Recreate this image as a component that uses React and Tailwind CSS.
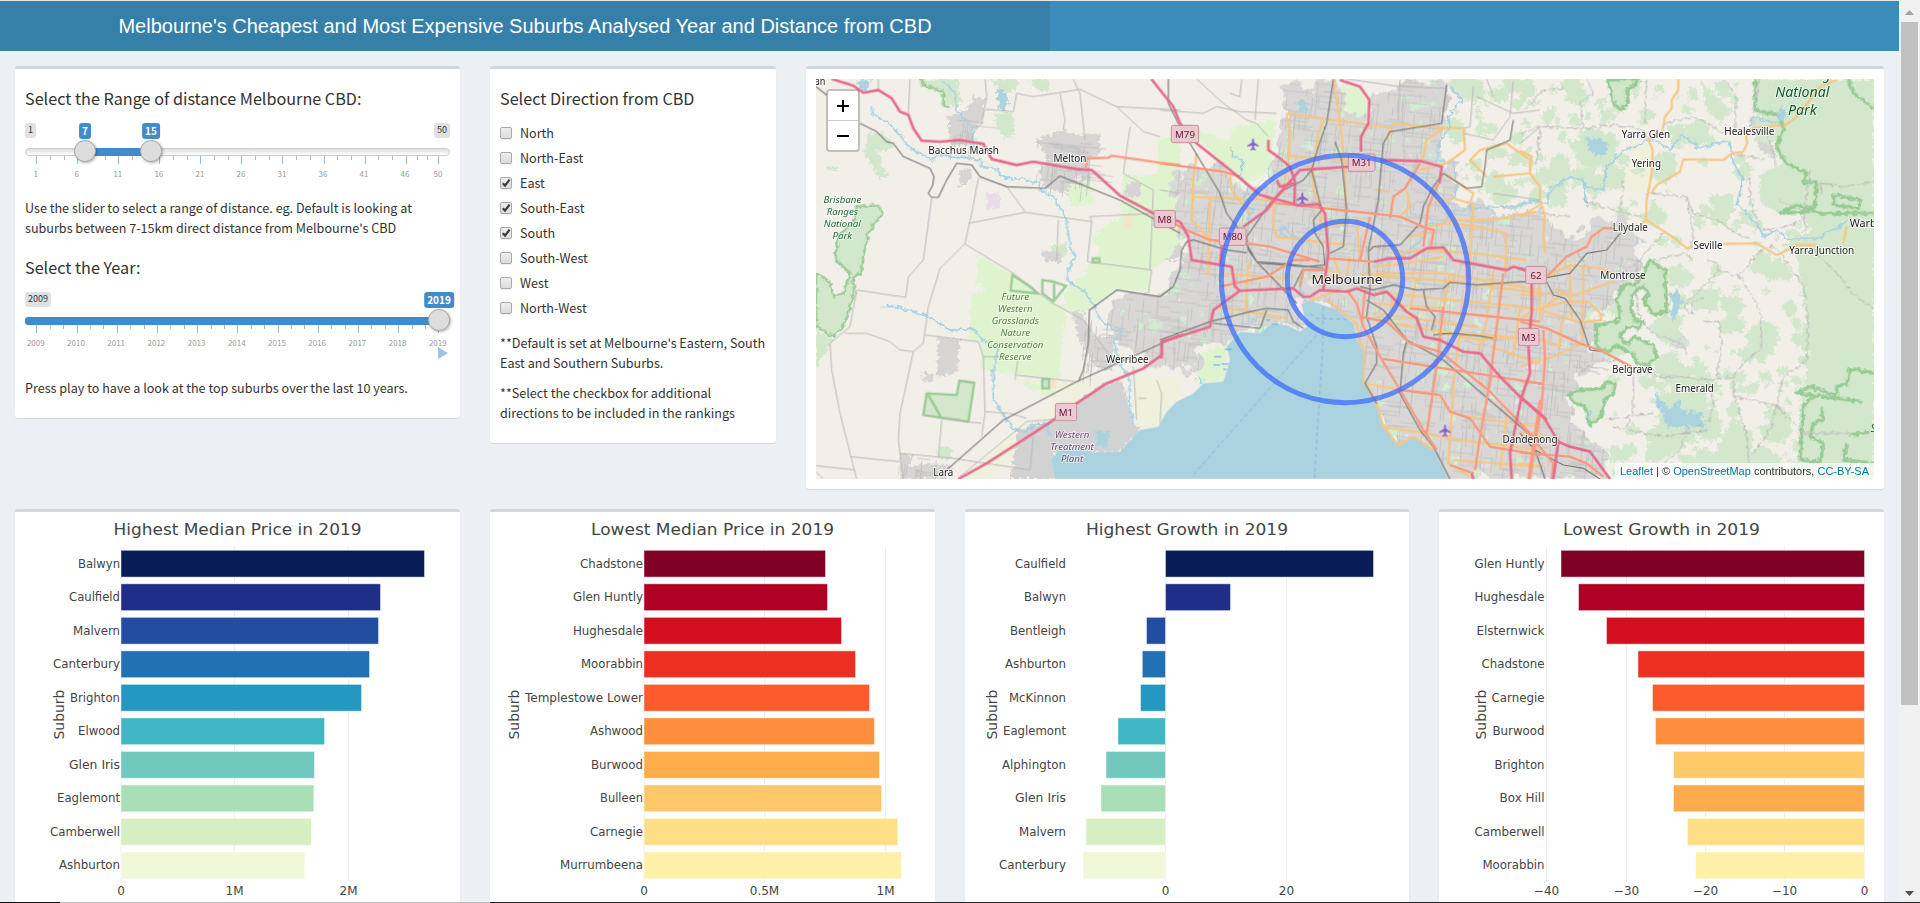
import React from "react";

const SANS = "font-['Noto_Sans_CJK_SC','Noto_Sans',sans-serif]";

/* ---------- Generic panels ---------- */

function Box({ className, children }) {
  return (
    <section
      className={`shrink-0 rounded-[3px] border-t-[3px] border-[#d2d6de] bg-white shadow-[0_1px_1px_rgba(0,0,0,0.1)] ${className}`}
    >
      {children}
    </section>
  );
}

function Heading({ children }) {
  return <h4 className="h-5 text-[16.2px] leading-5 text-[#333]">{children}</h4>;
}

/* ---------- Sliders ---------- */

function Slider({ ticks, min, max, fill, handles }) {
  const minors = [];
  ticks.forEach((t, i) => {
    if (i < ticks.length - 1) {
      const step = (ticks[i + 1].x - t.x) / 3;
      minors.push(t.x + step, t.x + step * 2);
    }
  });
  return (
    <div className="relative mt-[15px] h-[60px] w-[425px] font-['Noto_Sans_CJK_SC',sans-serif]">
      <div className="flex justify-between">
        <span className="h-[15px] rounded-[3px] bg-[#e1e1e1] px-[3px] text-[9px] leading-[14px] text-[#333]">{min}</span>
        {max && (
          <span className="h-[15px] rounded-[3px] bg-[#e1e1e1] px-[3px] text-[9px] leading-[14px] text-[#333]">{max}</span>
        )}
      </div>
      <div className="absolute left-0 top-[25px] h-2 w-[425px] rounded-full border border-[#ccc] bg-linear-to-b from-[#dedede] to-white" />
      <div
        className="absolute top-[25px] h-2 rounded-l-[3px] bg-[#428bca]"
        style={{ left: fill[0], width: fill[1] - fill[0] }}
      />
      {minors.map((x) => (
        <span key={x} className="absolute top-[33px] h-1 w-px bg-[#bbb]" style={{ left: Math.round(x) }} />
      ))}
      {ticks.map((t) => (
        <React.Fragment key={t.label}>
          <span className="absolute top-[33px] h-2 w-px bg-[#8fbfe3]" style={{ left: Math.round(t.x) }} />
          <span
            className="absolute top-[45px] w-10 -translate-x-1/2 text-center text-[8px] leading-3 text-[#999]"
            style={{ left: t.x - 0.5 }}
          >
            {t.label}
          </span>
        </React.Fragment>
      ))}
      {handles.map((h) => (
        <React.Fragment key={h.label}>
          <span
            className="absolute top-0 h-4 -translate-x-1/2 rounded-[3px] bg-[#428bca] px-[3px] text-[10px] font-bold leading-4 text-white"
            style={{ left: h.x }}
          >
            {h.label}
          </span>
          <span
            className="absolute top-[17px] size-[22px] -translate-x-1/2 rounded-full border border-[#aaa] bg-[#ddd] shadow-[1px_1px_3px_rgba(0,0,0,0.3)]"
            style={{ left: h.x }}
          />
        </React.Fragment>
      ))}
    </div>
  );
}

const distanceTicks = [1, 6, 11, 16, 21, 26, 31, 36, 41, 46, 50].map((v) => ({ label: v, x: 11.3 + (v - 1) * 8.206 }));
const yearTicks = Array.from({ length: 11 }, (_, i) => ({ label: 2009 + i, x: 11.3 + i * 40.2 }));

const directions = [
  ["North", false],
  ["North-East", false],
  ["East", true],
  ["South-East", true],
  ["South", true],
  ["South-West", false],
  ["West", false],
  ["North-West", false],
];

function Check({ on }) {
  return (
    <span className="relative size-3 rounded-[2px] border border-[#a9a9a9] bg-linear-to-b from-[#eee] to-[#dcdcdc] shadow-[0_1px_0_rgba(0,0,0,0.06)]">
      {on && (
        <svg viewBox="0 0 10 10" className="absolute left-0 top-0 size-[10px]">
          <path d="M1.8 5.2 L4 7.6 L8.6 1.6" fill="none" stroke="#3c3c3c" strokeWidth="2.2" />
        </svg>
      )}
    </span>
  );
}

/* ---------- Map ---------- */

function makeRandom(seed) {
  let s = seed;
  return () => {
    s = (s * 1664525 + 1013904223) % 4294967296;
    return s / 4294967296;
  };
}

function streetPath(seed, n, x0, y0, x1, y1) {
  const r = makeRandom(seed);
  let d = "";
  for (let i = 0; i < n; i++) {
    const x = x0 + r() * (x1 - x0);
    const y = y0 + r() * (y1 - y0);
    const len = 15 + r() * 75;
    if (r() < 0.5) d += `M${x.toFixed(0)},${y.toFixed(0)}l${len.toFixed(0)},${(len * 0.1).toFixed(0)}`;
    else d += `M${x.toFixed(0)},${y.toFixed(0)}l${(-len * 0.1).toFixed(0)},${len.toFixed(0)}`;
  }
  return d;
}

function blobPath(seed, n, x0, y0, x1, y1, min, max) {
  const r = makeRandom(seed);
  let d = "";
  for (let i = 0; i < n; i++) {
    const cx = x0 + r() * (x1 - x0);
    const cy = y0 + r() * (y1 - y0);
    const size = min + r() * r() * (max - min);
    for (let k = 0; k < 8; k++) {
      const a = (k / 8) * Math.PI * 2;
      const q = size * (0.45 + r() * 0.7);
      d += `${k ? "L" : "M"}${(cx + Math.cos(a) * q).toFixed(0)},${(cy + Math.sin(a) * q * 0.9).toFixed(0)}`;
    }
    d += "Z";
  }
  return d;
}

const URBAN =
  "M40,345 L130,310 200,335 270,385 330,345 350,250 370,130 385,75 480,57 L545,57 560,150 610,190 640,110 690,90 730,57 850,60 860,150 850,210 830,290 900,320 870,420 1000,450 1080,455 1140,440 1170,510 1240,530 1300,475 1400,480 1450,540 1430,640 1400,650 1370,720 1320,740 1310,790 1290,860 1350,900 1415,915 1320,925 1250,930 1240,1000 1230,1080 1290,1130 1340,1210 1350,1257 865,1257 820,1170 760,1130 715,1160 665,1090 650,1030 610,960 615,880 590,840 580,790 520,745 450,720 420,730 440,800 380,800 330,795 300,815 240,815 215,850 120,855 110,930 -40,920 -50,880 -140,870 -150,780 -120,700 0,705 60,600 85,540 40,480Z";
const BAY =
  "M-315,1257 L-325,1200 -290,1150 -200,1178 -120,1175 -60,1110 -5,1100 20,1055 50,1025 100,1000 130,970 190,965 210,900 200,860 240,815 300,820 330,795 380,795 420,815 440,800 425,735 450,722 520,745 580,790 590,840 615,880 610,960 650,1030 665,1090 715,1160 760,1130 820,1170 865,1257Z";

const WEST = "translate(-1080 0)";
const EAST = "translate(1080 -180)";

const westForest =
  "M360,57 H475 L482,130 450,142 430,132 430,100 400,95 365,80Z M560,57 H655 L650,90 620,100 590,75Z M585,160 L635,158 645,230 610,235 590,200Z M200,225 L245,215 285,250 265,275 235,270 245,320 270,350 235,352 215,310 190,280Z M80,320 h35 v10 h-35Z M48,810 L100,835 85,870 60,900 48,930Z M745,560 L800,550 800,590 760,590Z M415,1160 h38 v38 h-38Z M690,60 L750,57 745,100 705,85Z";
const westGrass =
  "M535,585 L630,640 750,725 800,740 780,900 780,960 650,945 540,925 545,850 505,835 515,700 560,685 525,675Z M970,350 L1070,345 1075,235 1140,228 V560 H1060 L1050,690 950,690 870,740 820,790 790,700 850,640 900,570 875,540 910,500 960,470Z M800,380 L870,350 880,430 810,440Z M670,955 L760,960 770,1015 680,985Z";
const eastForest =
  "M700,237 H1062 V920 L1000,850 900,750 850,640 780,640 720,610 720,520 790,490 765,440 775,385 700,340Z M820,700 L1062,700 1062,1437 830,1437 840,1210 870,1060 820,1030 860,960Z M540,240 L600,300 640,330 600,370 560,330Z M0,240 L40,240 50,280 0,310Z M150,250 L200,270 190,320 140,300Z M80,545 L140,560 140,620 90,620Z M150,430 L230,390 300,420 270,500 180,500Z M560,590 L640,580 640,640 590,640Z M480,1090 L560,1180 570,1270 480,1350 420,1380 370,1300 420,1270Z M640,1250 L700,1300 690,1400 620,1437 560,1400Z M300,237 L360,237 350,300Z";
const eastPark =
  "M265,237 H355 L350,250 320,270 325,310 300,330 275,300Z M390,780 L435,810 440,935 400,945 370,900 385,880 370,860 345,875 330,920 345,960 370,965 355,985 320,980 300,1010 320,1030 345,1010 400,1035 410,1070 385,1095 350,1090 340,1065 290,1035 260,1055 230,1040 228,975 290,965 300,940 290,900 310,855 350,850 370,820Z M145,1185 L175,1170 245,1165 260,1145 285,1150 280,1180 255,1200 245,1250 210,1275 195,1220 165,1210Z";
const eastParkLine =
  "M705,237 V330 L780,345 790,385 770,440 800,490 860,520 850,550 890,545 885,620 860,635 780,640 830,615 900,640 1062,640 M940,585 L1020,600 1015,625 940,615Z M985,237 L1000,280 1062,325 M1062,1120 L990,1105 980,1150 950,1160 950,1185 870,1160 830,1180 1030,1205 M880,1190 L850,1220 840,1380 900,1385 910,1330 870,1310 880,1270 910,1260 905,1220 M990,1305 L1050,1295 M980,1330 L970,1380 1062,1390";

const westMinor =
  "M235,57 V90 M330,57 L325,160 M555,57 L560,110 545,190 520,215 515,240 M560,148 L640,155 650,100 700,110 840,88 950,140 1140,150 M780,100 L795,180 790,210 M820,57 L840,100 855,240 M990,200 L970,340 1060,390 M950,140 L1030,215 1080,230 M395,415 L370,600 325,650 317,712 170,690 150,800 90,850 95,930 120,1060 170,1257 M535,355 L515,460 495,550 420,625 385,740 370,850 340,875 300,1060 295,1140 310,1257 M505,490 L675,457 875,485 870,470 1060,460 M620,380 L675,455 M775,480 L770,600 M875,485 L862,605 1055,630 1045,700 M1060,390 L1050,630 M495,552 L640,640 750,725 850,780 940,900 M375,825 L535,845 550,890 600,890 M135,820 L200,820 270,845 300,870 340,875 M550,890 L555,1060 545,1130 M655,890 L645,960 M645,945 L830,965 M150,1190 L300,1205 M300,1180 L460,1195 690,1230 700,1130 M425,1080 L415,1190 M555,1055 L630,1060 680,1075 M480,1250 L680,1085 760,1078 M545,1090 L420,1075 M48,1217 L165,1230 M48,1235 L70,1257 M1000,920 L1010,1080 M1070,960 L1085,1000 1080,1090 M1015,1015 L1040,1015";
const eastMinor =
  "M0,340 L70,270 130,265 M0,400 L60,380 190,385 240,380 280,375 340,380 380,400 M60,380 L50,490 M200,237 L220,280 180,310 190,385 M380,237 L375,370 M430,370 L520,350 580,380 610,400 M610,237 L650,290 645,380 M720,237 L700,340 M380,580 L500,590 520,640 590,660 650,700 690,715 M500,590 L520,710 505,750 M400,780 L490,760 515,775 M560,780 L595,790 590,820 540,870 490,920 520,945 515,910 550,890 M590,810 L660,830 M640,460 L740,480 M660,830 L720,930 725,1040 670,1090 640,1130 640,1190 700,1200 780,1220 M740,400 L770,495 M720,690 L690,600 690,530 M660,830 L710,760 760,740 790,770 850,860 865,960 860,1080 790,1130 770,1220 M840,640 L860,680 845,700 M725,690 L800,680 850,660 870,510 M870,740 L960,830 1000,880 1062,930 M905,585 L900,550 970,560 1062,545 M640,1130 L560,1140 480,1130 410,1130 340,1100 M560,1140 L580,1200 570,1260 500,1290 480,1350 430,1390 M640,1170 L660,1240 680,1310 690,1437 M700,1360 L750,1290 770,1220 850,1300 1000,1300 M400,1240 L250,1260 M340,1110 L340,1220 320,1280 M350,800 L345,870 360,960 400,1000 480,1030 500,1060 M430,700 L340,800 M550,960 L600,970 605,1050 590,1130 M190,600 L280,630 360,650 M300,640 L310,540 M60,640 L150,650 M270,1110 L200,1100 170,1130 M270,1280 L430,1310 560,1290 M820,620 L780,600 M170,750 L230,850 M160,1100 L240,1120";
const midMinor =
  "M110,57 L190,130 260,180 290,190 325,230 M0,150 L130,160 170,140 240,155 350,160 M295,57 L285,180 M245,57 L240,110 210,100 M560,57 L720,80 860,85 M720,60 L715,180 M940,80 L930,200 910,205 M950,110 L1060,160 1140,150 M1060,60 L1050,170 M910,220 L1000,240 1050,170 M980,57 L1000,110 M0,390 L60,400 M1000,400 L1140,420 M1140,200 L1080,250";

const motorways = {
  west: "M95,57 L160,77 190,98 235,90 275,115 300,155 325,165 340,205 365,242 420,245 480,240 550,252 575,297 650,315 700,305 830,327 875,330 960,407 1070,465 1140,485 M475,1257 L560,1210 700,1120 760,1080 830,1030 920,970 1030,925 1085,885 1085,845 1150,825",
  mid: "M60,485 L85,530 95,600 215,620 225,680 240,692 400,685 430,710 450,710 480,690 560,695 590,685 640,705 680,695 740,755 770,775 790,830 840,840 910,875 960,880 1020,950 1080,1010 1160,1080 M-26,57 L40,140 60,190 110,250 210,330 300,405 420,437 475,432 495,460 505,580 490,690 M325,240 V270 L360,295 390,320 405,365 403,435 M5,895 V845 L150,800 160,750 240,692 M180,620 L185,560 200,520 M250,500 L320,450 350,410 420,330 570,320 M660,300 L780,303 845,320 838,370 M540,60 L600,80 628,120 625,190 603,230 603,275 M350,360 L360,380 400,370 M640,605 L690,595 750,595 800,565 850,562 880,600 960,615 1040,630 1060,620 1100,632 M1115,670 L1115,760 1105,850 1110,940 1085,1010 1070,1080 1050,1180 1055,1257 M935,1240 L940,1257",
  east: "M0,1190 L70,1250 115,1325 150,1340 210,1355 270,1437 M115,1325 L100,1437 M0,805 L15,810",
};
const trunks = {
  west: "M858,325 L862,295 925,293 935,287 1080,308 1140,315",
  mid: "M0,310 L190,335 240,350 M310,405 L350,430 540,450 720,470 M690,475 L700,410 735,385 780,310 M720,470 L800,505 822,510 812,560 M40,490 L90,515 150,540 260,550 330,560 480,605 M180,680 L320,650 400,600 450,600 M500,595 L640,605 M630,470 L600,600 M835,370 L805,440 790,560 M850,740 L830,920 800,1120 M1030,640 L1010,800 990,960 960,1130 945,1230 M750,745 L950,765 1140,785 M560,690 L590,730 610,800 660,890 720,990 790,1110 830,1170 M660,895 L850,925 1140,970 M720,990 L840,1005 870,1055 930,1075 990,1160 1140,1185 M600,770 L680,785 750,850 840,875 985,990 1130,1140 M615,690 L605,790 M420,680 L430,630 500,630 M1140,1020 L1105,1257 M870,1215 L940,1240",
  east: "M80,830 L140,770 200,740 215,710 250,685 280,685 M0,965 L80,985 180,1030 250,1055 335,1100 M70,990 L75,1080 65,1220 50,1300 30,1437 M0,1270 L100,1390 95,1437 M0,1358 L150,1370 200,1390 250,1430 M0,1142 L70,1152",
};
const primaries = {
  mid: "M380,160 L520,180 700,205 M380,160 L390,220 385,300 370,400 M385,288 L560,300 M700,190 L830,203 910,205 M520,57 L540,190 552,300 560,450 M465,300 L475,220 490,180 M455,300 L460,390 485,450 480,500 560,490 M700,190 L680,240 M785,310 L800,240 850,205 M910,205 L915,270 860,310 780,330 M980,350 L930,300 960,270 1040,250 1110,300 1110,340 1000,350 M860,345 L940,400 930,430 880,415 820,430 M100,410 L210,415 330,420 M110,280 L100,350 95,480 150,540 M210,340 L215,390 245,430 270,460 M340,430 L340,500 350,530 560,555 M150,410 L145,650 M265,600 L260,690 258,750 M180,640 L380,655 M180,740 L380,775 M590,480 L600,600 M645,390 L690,395 M740,390 L750,440 720,470 M690,580 L800,570 940,580 1100,600 M640,620 L740,610 850,590 M650,640 L850,640 1140,690 M700,650 L900,665 1140,700 M690,700 L870,720 1090,740 M640,730 L850,745 M640,760 L950,800 M640,780 L840,815 1140,840 M620,970 L720,990 M665,1100 L800,1120 900,1140 1140,1170 M800,500 L870,490 950,500 1040,520 1035,640 M940,430 L935,520 925,680 895,850 880,980 865,1210 930,1250 M1000,630 L980,780 955,880 M1080,740 L1060,880 M870,640 L850,750 M770,650 L750,750 M700,720 L690,790 M990,860 L1140,910 M920,1070 L1070,1090 1140,1100 M850,820 L960,840 1060,830 M1040,1060 L1020,1230 M880,1200 L1000,1210 1140,1220 M500,720 L590,790 600,850 615,870 610,960 650,1030 670,1100 715,1155 760,1130 820,1170 M490,620 L560,660 M520,590 L540,650 M570,590 L560,650 M620,600 L640,680 M450,650 L540,650 M450,720 L540,690 M850,480 L1000,480 1130,455 M600,640 L700,650 M740,530 L800,520",
  east: "M475,237 V270 L455,300 455,325 435,350 427,395 M0,452 L35,470 30,520 60,560 60,600 75,650 70,700 75,760 M0,650 L60,615 M382,410 L398,450 395,520 380,600 378,660 410,680 465,715 500,745 520,740 M395,580 L410,555 480,515 490,478 610,480 635,460 670,455 682,430 675,395 700,385 780,375 M378,660 L360,675 M610,732 L710,730 770,765 830,735 890,735 M980,680 L970,730 M950,240 L900,260 870,300 830,350 790,380 M75,830 L150,795 240,805 280,820 M0,885 L70,885 120,870 150,890 280,845 M0,920 L60,930 180,968 245,960 240,940 205,905 140,905 40,930 0,960 M190,800 L188,1030 M150,800 L150,890 155,960 M60,830 V960 M125,960 L120,1040 M40,1010 L120,1040 M0,1100 L100,1070 190,1030 M0,1300 L75,1310 M0,1390 L70,1400 M60,930 L130,880",
};
const rails = {
  west: "M48,80 L80,105 M180,190 L230,215 260,245 280,250 310,290 390,325 402,350 398,375 385,400 395,412 415,412 440,360 470,310 515,315 540,350 620,380 735,385 780,348 960,420 1140,520 M440,1230 L610,1080 830,965 1140,825 M835,965 L850,930 865,850 868,750 950,690 1080,710 1120,680 1140,630",
  mid: "M60,630 L65,570 80,545 100,540 200,570 260,578 M25,57 V130 L55,190 90,250 180,400 200,460 230,500 290,605 380,612 490,625 M260,530 L265,570 290,605 410,730 M520,60 L500,190 475,260 455,330 485,450 460,480 465,520 490,560 495,615 M525,245 L545,300 560,450 550,560 510,580 M1060,180 L1050,240 980,270 975,320 965,380 920,385 850,340 820,380 790,440 780,490 720,555 640,560 625,575 M860,75 L845,190 690,215 670,250 655,420 625,570 630,690 M600,680 L640,690 700,675 770,690 850,685 870,667 950,675 1080,665 1160,667 M620,720 L670,750 740,840 850,900 1000,1030 1140,1150 M740,845 L730,880 720,1000 780,1110 820,1160 870,1257 M630,690 L620,770 650,860 650,910 615,970 650,1030 M0,840 L150,785 270,755 320,745 385,750 400,785 430,805 M160,790 L300,805 320,750 M790,690 L800,740 825,770 815,810 M820,825 L870,820 960,828 1000,835 M260,530 L330,430 370,390 430,360 455,330 M300,610 L440,620 495,615 M400,685 L430,625",
  east: "M80,833 L150,820 200,760 260,750 300,700 M80,845 L100,885 135,895 180,960 210,1050 250,1055 330,1100 M0,1300 L45,1350 130,1395 190,1405 240,1437 M45,1350 L75,1437",
};
const rivers = {
  west: "M215,140 L220,165 260,185 300,225 330,265 395,300 415,285 470,290 540,300 545,320 590,325 605,350 640,360 670,350 680,365 715,365 725,395 760,410 800,480 810,560 825,590 800,640 805,665 850,690 880,735 900,780 940,805 965,810 940,850 960,910 990,960 985,1030 1000,1090 M425,57 L465,100 470,150 515,200 520,260 M245,740 L290,740 385,770 450,810 520,805 560,850 595,870 580,930 580,1020 620,1080 640,1110 680,1115 700,1095 740,1090 M740,1090 L750,1130",
  mid: "M210,260 L220,290 250,300 240,350 265,380 250,430 280,450 260,480 M870,80 L905,120 865,170 870,200 840,240 830,300 880,310 890,380 880,420 M1140,420 L1060,440 1000,440 920,450 880,450 850,490 810,490 790,530 740,580 M690,590 L640,620 M440,730 L420,690 430,640 M380,530 L360,520 370,500 400,530 440,550 M740,580 L690,600",
  east: "M0,620 L30,600 80,610 90,570 150,530 190,540 200,560 250,570 260,500 310,450 350,440 380,415 420,430 450,450 485,405 540,445 610,425 630,430 640,490 670,540 650,610 710,670 730,710 770,690 800,715 905,715 920,695 960,680 985,660 M190,540 L200,625 M690,380 L700,350 740,365 780,370",
};
const lakes = {
  west: "M170,60 L215,62 195,90 178,88Z M590,80 L610,90 625,125 615,155 600,150 592,115Z M888,1110 L930,1115 920,1160 890,1160Z",
  mid: "M415,115 L445,125 440,160 418,155Z M110,950 L135,960 120,975Z M265,770 L295,775 285,788 265,785Z",
  east: "M197,410 L260,425 265,450 240,470 205,450Z M445,880 L475,870 488,900 460,965 450,940 460,915Z M405,1170 L425,1205 450,1225 475,1195 480,1230 550,1240 540,1260 555,1280 440,1280 420,1230 405,1210Z M790,320 L800,350 780,365 770,350Z M205,1230 h10 v30 h-10Z",
};

function Shield({ x, y, w, children }) {
  return (
    <g>
      <rect x={x - w / 2} y={y - 26} width={w} height="52" rx="6" fill="#ebc9d1" stroke="#c98a9b" strokeWidth="3" />
      <text x={x} y={y + 11} fontSize="29" textAnchor="middle" fill="#6d1034" stroke="none">
        {children}
      </text>
    </g>
  );
}

function Town({ x, y, w, size = 30, children }) {
  return (
    <text
      x={x}
      y={y}
      fontSize={size}
      textLength={w}
      lengthAdjust="spacingAndGlyphs"
      textAnchor="middle"
      fill="#222"
      stroke="#ffffff"
      strokeOpacity="0.7"
      strokeWidth="6"
      paintOrder="stroke"
    >
      {children}
    </text>
  );
}

function AreaName({ x, y, lines, fill, size = 29, step = 36 }) {
  return (
    <g fontSize={size} fontStyle="italic" textAnchor="middle" fill={fill} stroke="#ffffff" strokeOpacity="0.6" strokeWidth="5" paintOrder="stroke">
      {lines.map((l, i) => (
        <text key={l} x={x} y={y + i * step}>
          {l}
        </text>
      ))}
    </g>
  );
}

function Layer({ set, ...rest }) {
  return (
    <g fill="none" strokeLinejoin="round" {...rest}>
      {set.west && <path d={set.west} transform={WEST} />}
      {set.mid && <path d={set.mid} />}
      {set.east && <path d={set.east} transform={EAST} />}
    </g>
  );
}

const PLANE =
  "M0,-18 C3,-18 3,-13 3,-6 L17,3 V7 L3,3 V11 L8,15 V18 L0,16 L-8,18 V15 L-3,11 V3 L-17,7 V3 L-3,-6 C-3,-13 -3,-18 0,-18Z";

function MelbourneMap() {
  return (
    <svg viewBox="-1032 57 3174 1200" preserveAspectRatio="none" className="block h-[400px] w-[1058px] font-['Noto_Sans',sans-serif]">
      <defs>
        <filter id="rough" x="-5%" y="-5%" width="110%" height="110%">
          <feTurbulence type="fractalNoise" baseFrequency="0.09" numOctaves="3" seed="4" result="n" />
          <feDisplacementMap in="SourceGraphic" in2="n" scale="28" xChannelSelector="R" yChannelSelector="G" />
        </filter>
        <filter id="ragged" x="-5%" y="-5%" width="110%" height="110%">
          <feTurbulence type="fractalNoise" baseFrequency="0.02" numOctaves="4" seed="12" result="n" />
          <feDisplacementMap in="SourceGraphic" in2="n" scale="90" xChannelSelector="R" yChannelSelector="G" />
        </filter>
        <filter id="wiggle" x="-5%" y="-5%" width="110%" height="110%">
          <feTurbulence type="fractalNoise" baseFrequency="0.07" numOctaves="2" seed="9" result="n" />
          <feDisplacementMap in="SourceGraphic" in2="n" scale="18" xChannelSelector="R" yChannelSelector="G" />
        </filter>
        <mask id="urban" maskUnits="userSpaceOnUse" x="-1032" y="57" width="3174" height="1200">
          <path d={URBAN} fill="#fff" filter="url(#ragged)" />
          <path d="M500,700 L620,700 700,1100 760,1110 900,1257 H860 L600,1000Z" fill="#fff" />
        </mask>
      </defs>
      <rect x="-1032" y="57" width="3174" height="1200" fill="#f2efe9" />

      {/* Land cover */}
      <g filter="url(#rough)">
        <g transform={WEST}>
          <path d={westGrass} fill="#e0f3cf" />
          <path
            d="M640,950 L860,970 900,960 830,1020 760,1075 690,1080 650,1180 560,1257 H490 L620,1140 670,1090 820,1010Z M1010,950 L1140,960 V1060 L1080,1100 1010,1100 1000,1020Z"
            fill="#f0f1dc"
          />
          <path d={westForest} fill="#d3e7cc" />
          <path
            d="M445,170 L500,150 520,110 555,115 550,170 520,215 515,250 450,260Z M475,330 L515,325 520,360 480,380Z M705,240 L790,210 840,225 900,220 900,280 850,300 880,360 830,350 800,400 730,380 715,330 750,300Z M975,370 L1020,365 1020,410 980,410Z M415,830 L480,840 470,940 410,950Z M725,570 L790,580 780,610 730,600Z M820,750 L850,760 880,830 940,830 940,930 900,930 860,880 830,820Z M300,1180 L340,1185 330,1220 400,1210 460,1220 440,1257 300,1257Z M370,940 h30 v25 h-30Z M1060,555 H1140 V600 H1065Z"
            fill="#d6d5d4"
          />
          <path d="M655,1110 L765,1080 900,975 965,960 985,1030 1000,1090 1020,1110 960,1178 760,1180 775,1257 H630Z" fill="#d3d2d2" />
          <path d="M560,400 h40 v45 h-40Z" fill="#ebdbe8" />
          <path d="M975,465 h20 v40 h-20Z M745,960 h25 v25 h-25Z" fill="#f9e2c7" />
        </g>
        <path
          d="M0,140 L110,230 200,330 260,370 330,330 350,180 230,200 200,240 130,220 60,200 40,170Z M535,80 L600,80 628,130 615,190 560,160Z M-30,400 L60,480 70,530 20,600 -40,640Z M120,880 L200,850 195,965 110,970Z"
          fill="#e0f3cf"
        />
        <g transform={EAST}>
          <path d={eastForest} fill="#d3e7cc" />
          <path d="M330,420 L390,430 395,520 390,580 315,570 310,520 340,490Z" fill="#f0f1dc" />
          <path d="M690,350 L730,360 750,430 770,480 720,450 700,400Z M440,990 L490,1000 500,1050 460,1040Z" fill="#d6d5d4" />
        </g>
        <path d={blobPath(11, 230, 1330, 70, 2130, 1240, 8, 64)} fill="#d3e7cc" />
        <path d={blobPath(23, 80, 880, 70, 1340, 440, 10, 60)} fill="#d3e7cc" />
        <path d={blobPath(43, 90, 1450, 860, 1900, 1250, 8, 45)} fill="#d3e7cc" />
        <path d={blobPath(31, 18, 1560, 240, 1800, 560, 8, 40)} fill="#f2efe9" />
      </g>

      {/* Built-up area and its texture */}
      <g mask="url(#urban)">
        <rect x="-300" y="57" width="1900" height="1200" fill="#d8d7d6" />
        <path d={blobPath(5, 380, -150, 60, 1500, 1250, 5, 28)} fill="#d2ecd0" filter="url(#rough)" />
        <path d={blobPath(51, 150, -150, 60, 1500, 1250, 4, 20)} fill="#ccf7d2" filter="url(#rough)" />
        <path d={blobPath(71, 90, -150, 60, 1500, 1250, 4, 18)} fill="#ebe2e6" />
        <path d={streetPath(7, 2300, -150, 57, 1500, 1257)} fill="none" stroke="#c0bfbf" strokeWidth="2" />
      </g>
      <g fill="none" stroke="#bdbdbd" strokeWidth="2">
        <path d={streetPath(17, 60, -370, 240, -210, 370)} />
        <path d={streetPath(19, 22, -625, 180, -560, 250)} />
        <path d={streetPath(29, 26, -250, 780, -150, 920)} />
        <path d={streetPath(37, 14, -770, 1195, -640, 1250)} />
      </g>

      {/* Protected areas */}
      <g filter="url(#wiggle)" strokeLinejoin="round">
        <g transform={WEST} stroke="#97cb94" strokeWidth="7" fill="#d3e7cc">
          <path d="M170,440 L235,435 248,460 225,490 205,520 190,590 185,640 160,650 163,700 145,760 130,800 100,830 48,800 48,640 90,665 100,710 130,700 150,640 105,595 115,530 165,480Z" />
          <path d="M360,57 L372,75 430,95 430,135 450,142" fill="none" />
        </g>
        <g transform={EAST} stroke="#97cb94" strokeWidth="10">
          <path d={eastPark} fill="#d0e6c9" />
          <path d={eastParkLine} fill="none" />
        </g>
      </g>
      <g transform={WEST} stroke="#97cb94" strokeWidth="7" fill="#d3e7cc">
        <path d="M478,962 L523,968 505,1085 370,1065 380,1000 470,1005Z" />
        <path d="M385,1005 L425,1075" />
        <path d="M637,645 L690,680 712,700 632,692Z M727,660 L760,665 798,678 760,725 727,700Z M762,670 V720" fill="none" />
        <path d="M727,957 h20 v28 h-20Z M878,595 h20 v12 h-20Z" />
      </g>

      {/* Water */}
      <path d={BAY} fill="#aad3df" />
      <g filter="url(#rough)" fill="#aad3df">
        <path d={lakes.west} transform={WEST} />
        <path d={lakes.mid} />
        <path d={lakes.east} transform={EAST} />
      </g>
      <Layer set={rivers} stroke="#a5d1e2" strokeWidth="5.5" filter="url(#wiggle)" />
      <g stroke="#7f9fe0" strokeWidth="2" strokeDasharray="12 9" fill="none">
        <path d="M490,740 L488,860 463,1257" />
        <path d="M470,825 L95,1250" />
        <path d="M450,760 L470,775 560,778" />
      </g>
      <path d="M163,890 h20 M185,912 h20 M195,868 h20 M190,928 h10 M318,780 h12 M335,793 h20 M160,915 h20" stroke="#4aa3ee" strokeWidth="3" />

      {/* Transport */}
      <g fill="none" stroke="#b8b8b8" strokeWidth="3" strokeLinejoin="round">
        <path d={westMinor} transform={WEST} />
        <path d={midMinor} />
        <path d={eastMinor} transform={EAST} filter="url(#wiggle)" />
      </g>
      <Layer set={primaries} stroke="#f7c581" strokeWidth="6.5" />
      <Layer set={rails} stroke="#777" strokeWidth="3.5" />
      <Layer set={trunks} stroke="#fa9a7d" strokeWidth="7" />
      <Layer set={motorways} stroke="#e76b8b" strokeWidth="8" />

      {/* Airports */}
      <g fill="#8461c4">
        <path d={PLANE} transform="translate(279 253)" />
        <path d={PLANE} transform="translate(427 415)" />
        <path d={PLANE} transform="translate(855 1112)" />
      </g>

      {/* Road shields */}
      <Shield x={75} y={222} w={82}>M79</Shield>
      <Shield x={605} y={308} w={80}>M31</Shield>
      <Shield x={218} y={530} w={80}>M80</Shield>
      <Shield x={14} y={477} w={64}>M8</Shield>
      <Shield x={-282} y={1056} w={64}>M1</Shield>
      <Shield x={1128} y={645} w={62}>62</Shield>
      <Shield x={1106} y={831} w={62}>M3</Shield>

      {/* Names */}
      <g transform={WEST}>
        <Town x={60} y={75} w={32}>an</Town>
        <Town x={491} y={283} w={212}>Bacchus Marsh</Town>
        <Town x={810} y={306} w={99}>Melton</Town>
        <Town x={982} y={908} w={128}>Werribee</Town>
        <Town x={430} y={1247} w={60}>Lara</Town>
        <AreaName x={127} y={430} fill="#1e6b37" lines={["Brisbane", "Ranges", "National", "Park"]} />
        <AreaName x={646} y={720} fill="#4f8236" lines={["Future", "Western", "Grasslands", "Nature", "Conservation", "Reserve"]} />
        <AreaName x={816} y={1135} fill="#734a6c" lines={["Western", "Treatment", "Plant"]} />
      </g>
      <Town x={561} y={672} w={213} size={39}>Melbourne</Town>
      <g transform={EAST}>
        <Town x={378} y={415} w={145}>Yarra Glen</Town>
        <Town x={379} y={502} w={88}>Yering</Town>
        <Town x={688} y={405} w={150}>Healesville</Town>
        <Town x={331} y={692} w={105}>Lilydale</Town>
        <Town x={564} y={748} w={87}>Seville</Town>
        <Town x={905} y={762} w={195}>Yarra Junction</Town>
        <Town x={1052} y={681} w={126}>Warburt</Town>
        <Town x={309} y={838} w={136}>Montrose</Town>
        <Town x={337} y={1119} w={122}>Belgrave</Town>
        <Town x={524} y={1175} w={115}>Emerald</Town>
        <Town x={30} y={1328} w={165}>Dandenong</Town>
        <AreaName x={847} y={237} fill="#0f5a2a" size={42.5} step={54} lines={["Yarra Ranges", "National", "Park"]} />
        <text x="1052" y="1297" fontSize="30" fontStyle="italic" fill="#1e6b37">S</text>
      </g>

      {/* Distance rings */}
      <g fill="none" stroke="#3366ff" strokeOpacity="0.7" strokeWidth="15">
        <circle cx="555" cy="657" r="173" />
        <circle cx="555" cy="657" r="371" />
      </g>
    </svg>
  );
}

/* ---------- Bar charts ---------- */

const BLUES = ["#081d58", "#1f2e86", "#234da0", "#2171b3", "#2498c1", "#41b6c4", "#73c8bd", "#aadeb7", "#d6efc2", "#f1f8d8"];
const REDS = ["#800026", "#b00026", "#d41020", "#ed2f22", "#fd5b2e", "#fd8d3c", "#feab4b", "#fec868", "#fedf88", "#fff0a9"];

const charts = [
  {
    title: "Highest Median Price in 2019",
    left: 15, width: 445, zero: 121, labelX: 120, axisX: 64, colors: BLUES,
    ticks: [["0", 121], ["1M", 234.5], ["2M", 348.5]],
    bars: [["Balwyn", 424.5], ["Caulfield", 380.5], ["Malvern", 378.5], ["Canterbury", 369.5], ["Brighton", 361.5], ["Elwood", 324.5], ["Glen Iris", 314.5], ["Eaglemont", 313.8], ["Camberwell", 311.3], ["Ashburton", 304.8]],
  },
  {
    title: "Lowest Median Price in 2019",
    left: 490, width: 445, zero: 644, labelX: 643, axisX: 519, colors: REDS,
    ticks: [["0", 644], ["0.5M", 764.5], ["1M", 885.5]],
    bars: [["Chadstone", 825.5], ["Glen Huntly", 827.5], ["Hughesdale", 841.5], ["Moorabbin", 855.5], ["Templestowe Lower", 869.5], ["Ashwood", 874.5], ["Burwood", 879.5], ["Bulleen", 881.5], ["Carnegie", 897.8], ["Murrumbeena", 901.5]],
  },
  {
    title: "Highest Growth in 2019",
    left: 965, width: 444, zero: 1165.5, labelX: 1066, axisX: 997, colors: BLUES,
    ticks: [["0", 1165.5], ["20", 1286.5]],
    bars: [["Caulfield", 1373.5], ["Balwyn", 1230.5], ["Bentleigh", 1146.5], ["Ashburton", 1142.3], ["McKinnon", 1140.5], ["Eaglemont", 1118], ["Alphington", 1106], ["Glen Iris", 1101], ["Malvern", 1086], ["Canterbury", 1083]],
  },
  {
    title: "Lowest Growth in 2019",
    left: 1439, width: 445, zero: 1864.5, labelX: 1544.5, axisX: 1486, colors: [...REDS.slice(0, 6), REDS[7], REDS[6], REDS[8], REDS[9]],
    ticks: [["−40", 1546.5], ["−30", 1626.5], ["−20", 1705.5], ["−10", 1784.5], ["0", 1864.5]],
    bars: [["Glen Huntly", 1561], ["Hughesdale", 1578.5], ["Elsternwick", 1606.5], ["Chadstone", 1638], ["Carnegie", 1652.5], ["Burwood", 1655.5], ["Brighton", 1673.5], ["Box Hill", 1673.5], ["Camberwell", 1687.5], ["Moorabbin", 1695.5]],
  },
];

function BarChart({ chart }) {
  const { left, width, zero, bars, ticks, colors } = chart;
  const pitch = 33.52;
  return (
    <svg
      width={width}
      height="391"
      viewBox={`${left} 512 ${width} 391`}
      className="block font-['Verdana','DejaVu_Sans',sans-serif]"
      fill="#444"
    >
      <text x={left + width / 2} y="535" fontSize="16.6" textAnchor="middle" textLength={TITLE_WIDTH[chart.title]} lengthAdjust="spacingAndGlyphs">
        {chart.title}
      </text>
      {ticks.map(([label, x]) => (
        <g key={label}>
          <path d={`M${x},547 V882`} stroke="#eee" />
          <text x={x} y="895" fontSize="12" textAnchor="middle">
            {label}
          </text>
        </g>
      ))}
      {bars.map(([label, end], i) => (
        <g key={label}>
          <rect
            x={Math.min(zero, end)}
            y={550.3 + i * pitch}
            width={Math.abs(end - zero)}
            height="26.8"
            fill={colors[i]}
            stroke="#fff"
            strokeOpacity="0.45"
          />
          <text x={chart.labelX} y={Math.floor(568 + i * pitch)} fontSize="12" textAnchor="end" textLength={LABEL_WIDTH[label]} lengthAdjust="spacingAndGlyphs">
            {label}
          </text>
        </g>
      ))}
      <text transform={`translate(${chart.axisX} 714.5) rotate(-90)`} fontSize="14" textAnchor="middle" textLength="50">
        Suburb
      </text>
    </svg>
  );
}

const TITLE_WIDTH = {
  "Highest Median Price in 2019": 248,
  "Lowest Median Price in 2019": 243,
  "Highest Growth in 2019": 202,
  "Lowest Growth in 2019": 197,
};
const LABEL_WIDTH = {
  Balwyn: 42, Caulfield: 51, Malvern: 47, Canterbury: 67, Brighton: 50, Elwood: 42, "Glen Iris": 51, Eaglemont: 63,
  Camberwell: 70, Ashburton: 61, Chadstone: 63, "Glen Huntly": 70, Hughesdale: 70, Moorabbin: 62, "Templestowe Lower": 118,
  Ashwood: 53, Burwood: 52, Bulleen: 43, Carnegie: 53, Murrumbeena: 83, Bentleigh: 56, McKinnon: 57, Alphington: 64,
  Elsternwick: 68, "Box Hill": 45,
};

/* ---------- Page ---------- */

export default function App() {
  return (
    <div className="relative flex h-[903px] w-[1920px] overflow-hidden bg-[#ecf0f5]">
      <div className="w-[1899px]">
        <header className="flex h-[51px] border-t border-[#e4e6e8] bg-[#3c8dbc]">
          <div className="flex w-[1050px] justify-center bg-[#367fa9] font-['Liberation_Sans',Arial,sans-serif] text-[20px] leading-[50px] text-white">
            Melbourne's Cheapest and Most Expensive Suburbs Analysed Year and Distance from CBD
          </div>
        </header>

        <main className="px-[15px] pt-[15px]">
          <div className={`mb-5 flex items-start gap-[30px] text-[12.6px] leading-5 text-[#333] ${SANS}`}>
            <Box className="h-[352px] w-[445px] px-[10px] pt-[19px]">
              <Heading>Select the Range of distance Melbourne CBD:</Heading>
              <Slider
                ticks={distanceTicks}
                min="1"
                max="50"
                fill={[60, 126]}
                handles={[{ label: "7", x: 60 }, { label: "15", x: 126 }]}
              />
              <p className="mt-[15px] whitespace-nowrap">
                Use the slider to select a range of distance. eg. Default is looking at
                <br />
                suburbs between 7-15km direct distance from Melbourne's CBD
              </p>
              <div className="mt-[19px]">
                <Heading>Select the Year:</Heading>
              </div>
              <div className="relative">
                <Slider ticks={yearTicks} min="2009" fill={[0, 414]} handles={[{ label: "2019", x: 414 }]} />
                <svg viewBox="0 0 10 12" className="absolute left-[413px] top-[55px] h-3 w-[10px]">
                  <path d="M0 0 L10 6 L0 12Z" fill="#9cc5e3" />
                </svg>
              </div>
              <p className="mt-[26px]">Press play to have a look at the top suburbs over the last 10 years.</p>
            </Box>

            <Box className="h-[377px] w-[286px] px-[10px] pt-[19px]">
              <Heading>Select Direction from CBD</Heading>
              <div className="mt-[15px] flex flex-col gap-[5px]">
                {directions.map(([name, on]) => (
                  <label key={name} className="flex h-5 items-center gap-2">
                    <Check on={on} />
                    {name}
                  </label>
                ))}
              </div>
              <p className="mt-[15px] whitespace-nowrap">
                **Default is set at Melbourne's Eastern, South
                <br />
                East and Southern Suburbs.
              </p>
              <p className="mt-[10px]">
                **Select the checkbox for additional
                <br />
                directions to be included in the rankings
              </p>
            </Box>

            <Box className="h-[423px] w-[1078px] p-[10px]">
              <div className="relative h-[400px] w-[1058px] overflow-hidden">
                <MelbourneMap />
                <div className="absolute left-[10px] top-[10px] flex w-[34px] flex-col overflow-hidden rounded-[4px] border-2 border-black/20 bg-white bg-clip-padding">
                  <span className="relative h-[30px] border-b border-[#ccc]">
                    <span className="absolute left-[9px] top-[14px] h-[2px] w-3 bg-black" />
                    <span className="absolute left-[14px] top-[9px] h-3 w-[2px] bg-black" />
                  </span>
                  <span className="relative h-[29px]">
                    <span className="absolute left-[9px] top-[14px] h-[2px] w-3 bg-black" />
                  </span>
                </div>
                <div className="absolute bottom-0 right-0 h-4 w-[259px] whitespace-nowrap bg-white/70 px-[5px] font-['Liberation_Sans',Arial,sans-serif] text-[11px] leading-4 text-[#333]">
                  <span className="text-[#0078a8]">Leaflet</span> | © <span className="text-[#0078a8]">OpenStreetMap</span> contributors,{" "}
                  <span className="text-[#0078a8]">CC-BY-SA</span>
                </div>
              </div>
            </Box>
          </div>

          <div className="flex gap-[30px]">
            {charts.map((c) => (
              <Box key={c.title} className={c.width === 444 ? "w-[444px]" : "w-[445px]"}>
                <BarChart chart={c} />
              </Box>
            ))}
          </div>
        </main>
      </div>

      {/* Scroll bar */}
      <aside className="flex w-[21px] flex-col items-center bg-[#f1f1f1]">
        <svg viewBox="0 0 21 22" className="h-[22px] w-[21px]">
          <path d="M6 15 L10.5 10 L15 15Z" fill="#a3a3a3" />
        </svg>
        <div className="h-[683px] w-[17px] bg-[#c1c1c1]" />
        <div className="flex-1" />
        <svg viewBox="0 0 21 22" className="h-[22px] w-[21px]">
          <path d="M6 10 L15 10 L10.5 15Z" fill="#505050" />
        </svg>
      </aside>

      {/* Window edge */}
      <div className="absolute bottom-0 left-0 flex h-px w-full">
        <div className="w-[60px] bg-[#111]" />
        <div className="w-[430px] bg-[#bbb]" />
        <div className="flex-1 bg-[#22242a]" />
      </div>
    </div>
  );
}
